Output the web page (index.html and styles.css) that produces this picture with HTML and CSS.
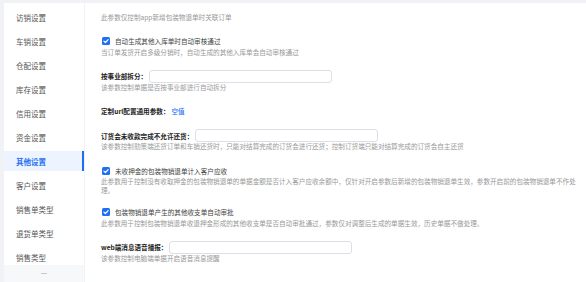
FILE: index.html
```
<!DOCTYPE html>
<html lang="zh-CN">
<head>
    <meta charset="UTF-8">
    <meta name="viewport" content="width=device-width, initial-scale=1.0">
    <title>其他设置</title>
    <link rel="stylesheet" href="styles.css">
</head>
<body>
    <div class="layout">
        <aside class="sidebar">
            <ul class="menu">
                <li class="menu-item">访销设置</li>
                <li class="menu-item">车销设置</li>
                <li class="menu-item">仓配设置</li>
                <li class="menu-item">库存设置</li>
                <li class="menu-item">信用设置</li>
                <li class="menu-item">资金设置</li>
                <li class="menu-item active">其他设置</li>
                <li class="menu-item">客户设置</li>
                <li class="menu-item">销售单类型</li>
                <li class="menu-item">退货单类型</li>
                <li class="menu-item">销售类型</li>
            </ul>
            <div class="sidebar-foot"><span class="dash"></span></div>
        </aside>

        <main class="content">
            <div class="setting">
                <p class="desc">此参数仅控制app新增包装物退单时关联订单</p>
            </div>

            <div class="setting">
                <label class="row">
                    <span class="checkbox"><svg viewBox="0 0 8 8" width="8" height="8"><path d="M1.9 4.1 3.4 5.5 6.2 2.6" fill="none" stroke="#fff" stroke-width="1.2" stroke-linecap="round" stroke-linejoin="round"/></svg></span>
                    <span class="check-label">自动生成其他入库单时自动审核通过</span>
                </label>
                <p class="desc">当订单发货开启多级分销时，自动生成的其他入库单会自动审核通过</p>
            </div>

            <div class="setting">
                <div class="row">
                    <span class="field-label">按事业部拆分：</span>
                    <input class="field-input" type="text">
                </div>
                <p class="desc">该参数控制单据是否按事业部进行自动拆分</p>
            </div>

            <div class="setting compact">
                <div class="row">
                    <span class="field-label">定制url配置通用参数：</span>
                    <a class="link">空值</a>
                </div>
            </div>

            <div class="setting">
                <div class="row">
                    <span class="field-label">订货会未收款完成不允许还货：</span>
                    <input class="field-input" type="text">
                </div>
                <p class="desc">该参数控制勤策端还货订单和车销还货时，只能对结算完成的订货会进行还货；控制订货端只能对结算完成的订货会自主还货</p>
            </div>

            <div class="setting compact">
                <label class="row">
                    <span class="checkbox"><svg viewBox="0 0 8 8" width="8" height="8"><path d="M1.9 4.1 3.4 5.5 6.2 2.6" fill="none" stroke="#fff" stroke-width="1.2" stroke-linecap="round" stroke-linejoin="round"/></svg></span>
                    <span class="check-label">未收押金的包装物销退单计入客户应收</span>
                </label>
                <p class="desc">此参数用于控制没有收取押金的包装物销退单的单据金额是否计入客户应收余额中，仅针对开启参数后新增的包装物销退单生效，参数开启前的包装物销退单不作处理。</p>
            </div>

            <div class="setting">
                <label class="row">
                    <span class="checkbox"><svg viewBox="0 0 8 8" width="8" height="8"><path d="M1.9 4.1 3.4 5.5 6.2 2.6" fill="none" stroke="#fff" stroke-width="1.2" stroke-linecap="round" stroke-linejoin="round"/></svg></span>
                    <span class="check-label">包装物销退单产生的其他收支单自动审批</span>
                </label>
                <p class="desc">此参数用于控制包装物销退单收退押金形成的其他收支单是否自动审批通过，参数仅对调整后生成的单据生效，历史单据不做处理。</p>
            </div>

            <div class="setting">
                <div class="row">
                    <span class="field-label">web端消息语音播报：</span>
                    <input class="field-input" type="text">
                </div>
                <p class="desc">该参数控制电脑端单据开启语音消息提醒</p>
            </div>
        </main>
    </div>
</body>
</html>
```

FILE: styles.css
```
* {
    margin: 0;
    padding: 0;
    box-sizing: border-box;
}

body {
    font-family: 'Noto Sans CJK SC', 'Noto Sans', sans-serif;
    background: #f0f2f5;
    height: 100vh;
    overflow: hidden;
}

.layout {
    display: flex;
    height: 100%;
    padding: 3px 0 0 4px;
    gap: 1px;
}

/* left menu */
.sidebar {
    width: 80px;
    flex-shrink: 0;
    display: flex;
    flex-direction: column;
}

.menu {
    list-style: none;
    background: #fff;
    flex: 1;
    overflow: hidden;
    padding-top: 4px;
}

.menu-item {
    height: 20px;
    margin-bottom: 4px;
    padding-left: 12px;
    display: flex;
    align-items: center;
    font-size: 7.5px;
    color: #555;
    white-space: nowrap;
}

.menu-item.active {
    background: #edf4ff;
    color: #1d6ff2;
    font-weight: 700;
    box-shadow: inset -2px 0 0 #1d6ff2;
}

.sidebar-foot {
    height: 17px;
    background: #f7f8fa;
    display: flex;
    justify-content: center;
    align-items: center;
}

.dash {
    width: 6px;
    height: 1px;
    background: #c8c8c8;
}

/* settings */
.content {
    flex: 1;
    background: #fff;
    padding: 9.5px 8px 0 16px;
    font-size: 6.6px;
}

.setting {
    margin-bottom: 13.5px;
}

.setting.compact {
    margin-bottom: 11.5px;
}

.row {
    height: 13px;
    display: flex;
    align-items: center;
    color: #333;
}

.checkbox {
    width: 8px;
    height: 8px;
    margin-left: 1px;
    margin-right: 5px;
    border-radius: 1.5px;
    background: #1f6ff5;
    display: flex;
}

.check-label {
    color: #444;
}

.field-label {
    font-weight: 700;
    color: #222;
    margin-right: 2px;
}

.field-input {
    width: 183px;
    height: 13px;
    border: 1px solid #dcdfe6;
    border-radius: 3px;
    background: #fff;
    outline: none;
}

.link {
    color: #1f6ff5;
    font-weight: 500;
}

.desc {
    line-height: 8.5px;
    color: #999;
    max-width: 478px;
}
```
